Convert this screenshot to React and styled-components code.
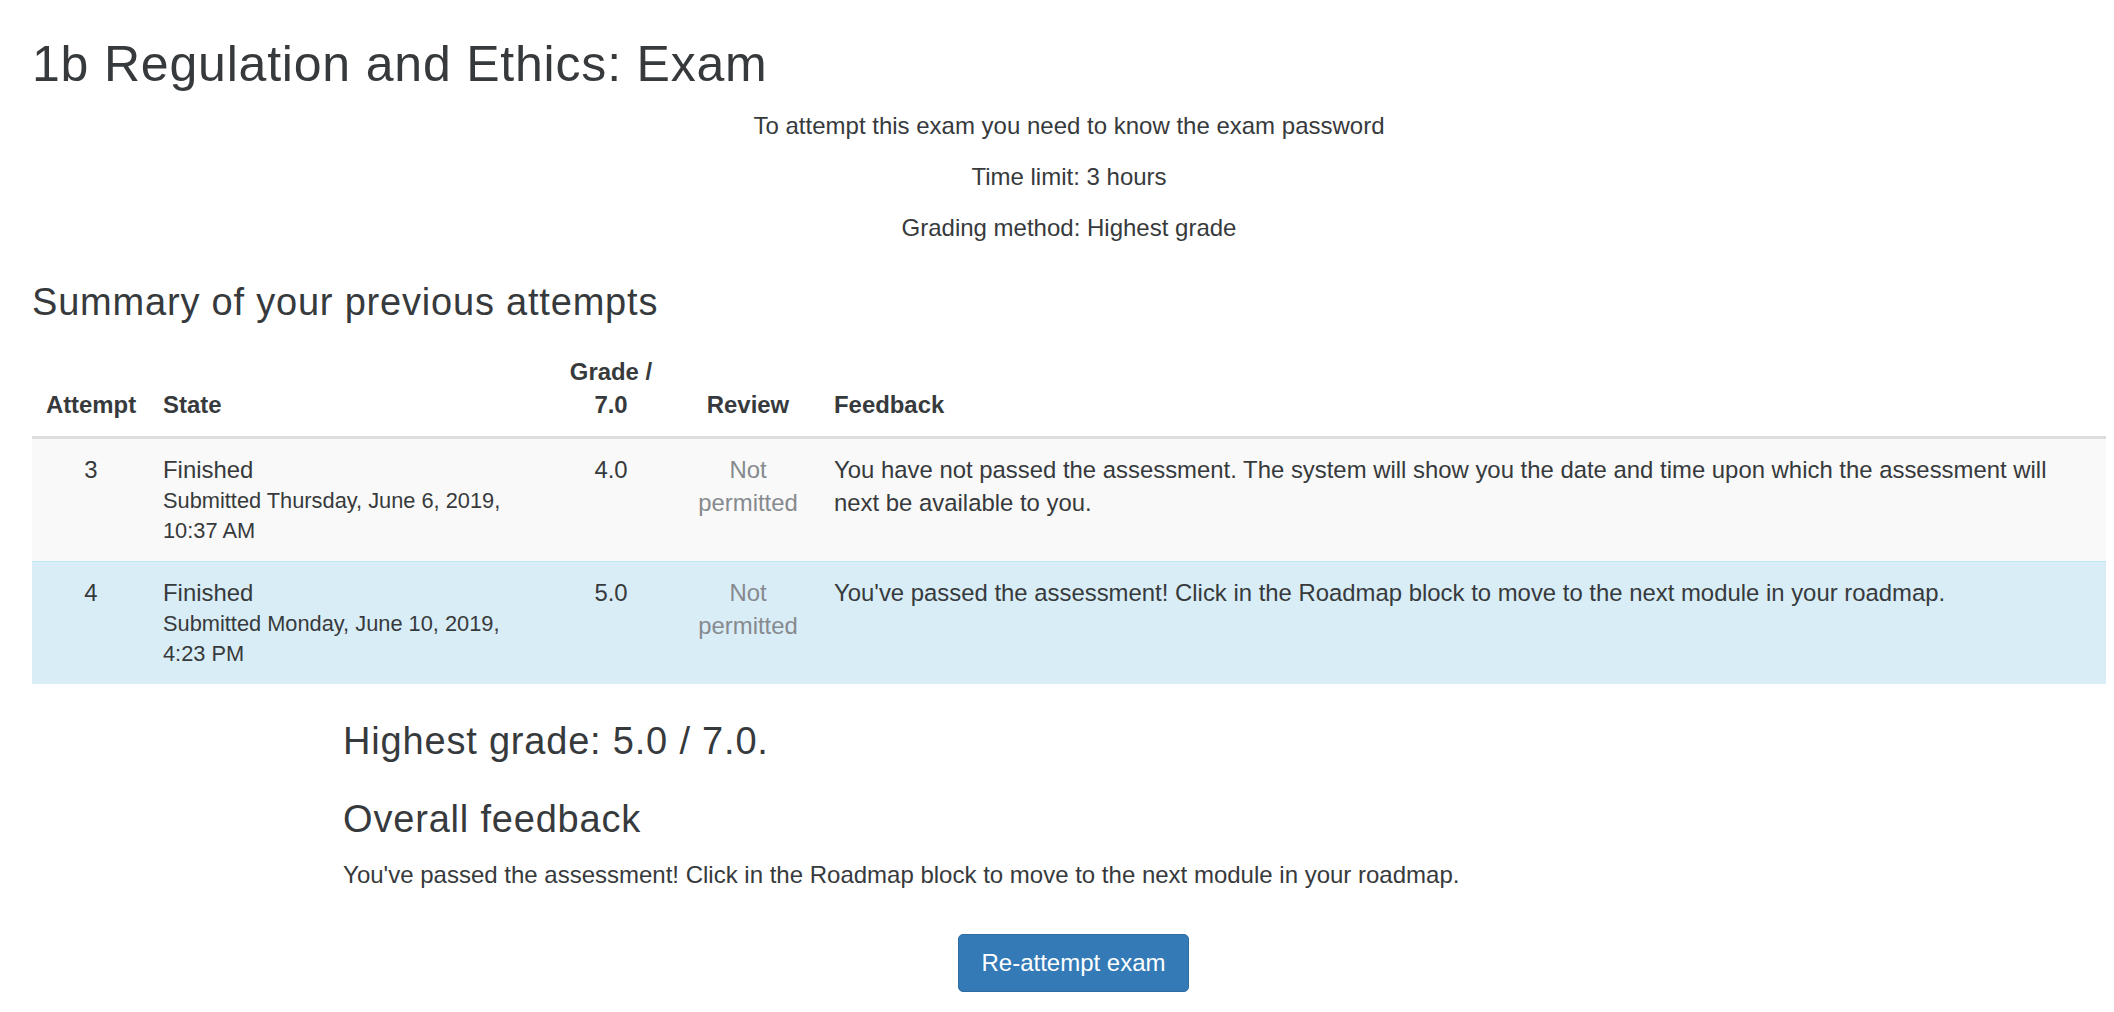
import React from "react";
import styled, { createGlobalStyle } from "styled-components";

const GlobalStyle = createGlobalStyle`
  html, body {
    margin: 0;
    padding: 0;
    background: #ffffff;
  }
  body {
    font-family: "Liberation Sans", Arial, Helvetica, sans-serif;
    color: #373a3c;
  }
`;

const Page = styled.main`
  padding: 34px 8px 40px 32px;
  font-size: 24px;
  line-height: 35px;
`;

const Title = styled.h1`
  margin: 0;
  font-size: 50px;
  line-height: 60px;
  font-weight: 400;
  letter-spacing: 0.8px;
`;

const InfoBox = styled.div`
  margin-top: 14px;
  text-align: center;
`;

const InfoLine = styled.p`
  margin: 0 0 16px;
`;

const SectionHeading = styled.h3`
  margin: ${(p) => p.$mt || 0}px 0 ${(p) => p.$mb || 0}px;
  font-size: 38px;
  line-height: 46px;
  font-weight: 400;
  letter-spacing: 0.8px;
`;

const Table = styled.table`
  width: 100%;
  border-collapse: collapse;
  table-layout: fixed;
  font-size: 23.9px;
  line-height: 33px;
`;

const HeadCell = styled.th`
  padding: 14px 13px 15px;
  font-weight: 700;
  text-align: ${(p) => p.$align || "left"};
  vertical-align: bottom;
  border-bottom: 3px solid #dddddd;
`;

const Row = styled.tr`
  background: ${(p) => p.$bg};
`;

const Cell = styled.td`
  padding: 14px ${(p) => (p.$wide ? 26 : 13)}px 15px 13px;
  vertical-align: top;
  text-align: ${(p) => p.$align || "left"};
  color: ${(p) => (p.$muted ? "#868a8e" : "inherit")};
  border-top: 1px solid ${(p) => p.$line || "transparent"};
`;

const StateDetails = styled.span`
  display: block;
  font-size: 21.8px;
  line-height: 30px;
`;

const FeedbackBox = styled.div`
  width: 70%;
  margin: 34px auto 0;
`;

const FeedbackText = styled.p`
  margin: 15px 0 0;
`;

const ButtonRow = styled.div`
  margin-top: 42px;
  display: flex;
  justify-content: center;
  padding-left: 9px;
`;

const PrimaryButton = styled.button`
  font-family: inherit;
  font-size: 24px;
  line-height: 36px;
  padding: 10px 22px;
  color: #ffffff;
  background: #337ab7;
  border: 1px solid #2e6da4;
  border-radius: 5px;
  cursor: pointer;
`;

const attempts = [
  {
    n: 3,
    state: "Finished",
    details: "Submitted Thursday, June 6, 2019, 10:37 AM",
    grade: "4.0",
    feedback:
      "You have not passed the assessment. The system will show you the date and time upon which the assessment will next be available to you.",
    bg: "#f9f9f9",
    line: "transparent",
  },
  {
    n: 4,
    state: "Finished",
    details: "Submitted Monday, June 10, 2019, 4:23 PM",
    grade: "5.0",
    feedback:
      "You've passed the assessment! Click in the Roadmap block to move to the next module in your roadmap.",
    bg: "#d9edf7",
    line: "#bce8f1",
  },
];

export default function App() {
  return (
    <>
      <GlobalStyle />
      <Page>
        <Title>1b Regulation and Ethics: Exam</Title>
        <InfoBox>
          <InfoLine>To attempt this exam you need to know the exam password</InfoLine>
          <InfoLine>Time limit: 3 hours</InfoLine>
          <InfoLine>Grading method: Highest grade</InfoLine>
        </InfoBox>

        <SectionHeading $mt={34} $mb={16}>Summary of your previous attempts</SectionHeading>

        <Table>
          <colgroup>
            <col style={{ width: "118px" }} />
            <col style={{ width: "397px" }} />
            <col style={{ width: "128px" }} />
            <col style={{ width: "146px" }} />
            <col />
          </colgroup>
          <thead>
            <tr>
              <HeadCell $align="center">Attempt</HeadCell>
              <HeadCell>State</HeadCell>
              <HeadCell $align="center">Grade / 7.0</HeadCell>
              <HeadCell $align="center">Review</HeadCell>
              <HeadCell>Feedback</HeadCell>
            </tr>
          </thead>
          <tbody>
            {attempts.map((a) => (
              <Row key={a.n} $bg={a.bg}>
                <Cell $align="center" $line={a.line}>{a.n}</Cell>
                <Cell $line={a.line}>
                  {a.state}
                  <StateDetails>{a.details}</StateDetails>
                </Cell>
                <Cell $align="center" $line={a.line}>{a.grade}</Cell>
                <Cell $align="center" $muted $line={a.line}>Not permitted</Cell>
                <Cell $wide $line={a.line}>{a.feedback}</Cell>
              </Row>
            ))}
          </tbody>
        </Table>

        <FeedbackBox>
          <SectionHeading>Highest grade: 5.0 / 7.0.</SectionHeading>
          <SectionHeading $mt={32}>Overall feedback</SectionHeading>
          <FeedbackText>
            You've passed the assessment! Click in the Roadmap block to move to the next module in your roadmap.
          </FeedbackText>
        </FeedbackBox>

        <ButtonRow>
          <PrimaryButton type="button">Re-attempt exam</PrimaryButton>
        </ButtonRow>
      </Page>
    </>
  );
}
